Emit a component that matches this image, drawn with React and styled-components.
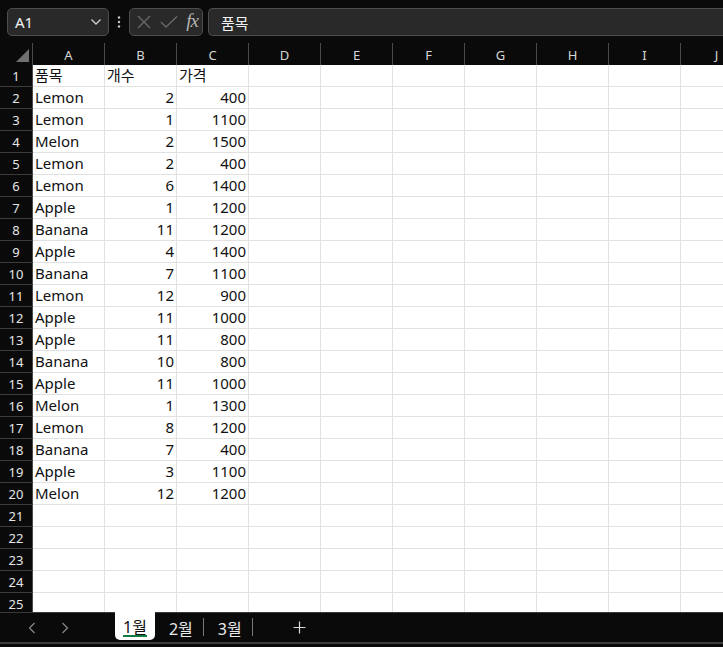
import React from 'react'
import styled, { createGlobalStyle } from 'styled-components'

const GlobalStyle = createGlobalStyle`
  html, body {
    margin: 0;
    padding: 0;
    background: #0a0a0a;
    overflow: hidden;
  }
  body {
    font-family: "Noto Sans", "Noto Sans CJK KR", sans-serif;
  }
`

const rows = [
  ['품목', '개수', '가격'],
  ['Lemon', 2, 400],
  ['Lemon', 1, 1100],
  ['Melon', 2, 1500],
  ['Lemon', 2, 400],
  ['Lemon', 6, 1400],
  ['Apple', 1, 1200],
  ['Banana', 11, 1200],
  ['Apple', 4, 1400],
  ['Banana', 7, 1100],
  ['Lemon', 12, 900],
  ['Apple', 11, 1000],
  ['Apple', 11, 800],
  ['Banana', 10, 800],
  ['Apple', 11, 1000],
  ['Melon', 1, 1300],
  ['Lemon', 8, 1200],
  ['Banana', 7, 400],
  ['Apple', 3, 1100],
  ['Melon', 12, 1200],
]
const columns = ['A', 'B', 'C', 'D', 'E', 'F', 'G', 'H', 'I', 'J']
const totalRows = 25

const Window = styled.div`
  width: 723px;
  height: 647px;
  background: #0a0a0a;
  display: flex;
  flex-direction: column;
  overflow: hidden;
`

const FormulaBar = styled.div`
  display: flex;
  align-items: center;
  height: 28px;
  padding: 8px 0 7px 7px;
`

const FieldBox = styled.div`
  box-sizing: border-box;
  height: 28px;
  background: #292929;
  border: 1px solid #4d4d4d;
  border-radius: 5px;
  display: flex;
  align-items: center;
`

const NameBox = styled(FieldBox)`
  width: 102px;
  padding: 0 6px 0 7px;
  justify-content: space-between;
  color: #f2f2f2;
  font-size: 15px;
`

const Dots = styled.div`
  width: 20px;
  display: flex;
  justify-content: center;
`

const ActionBox = styled(FieldBox)`
  width: 74px;
  padding: 0 4px 0 6px;
  justify-content: space-between;
`

const Fx = styled.span`
  font-family: "Liberation Serif", "DejaVu Serif", serif;
  font-style: italic;
  font-size: 19px;
  color: #b5b5b5;
  letter-spacing: -1px;
  margin-top: -3px;
`

const FormulaInput = styled(FieldBox)`
  flex: 1;
  margin-left: 5px;
  padding-left: 12px;
  border-right: none;
  border-radius: 5px 0 0 5px;
  color: #f2f2f2;
  font-size: 15px;
`

const Sheet = styled.div`
  flex: 1;
  display: grid;
  grid-template-columns: 33px repeat(10, 72px);
  grid-template-rows: 22px repeat(${totalRows}, 22px);
  background: #fff;
  overflow: hidden;
`

const Corner = styled.div`
  position: relative;
  background: #0a0a0a;
  box-sizing: border-box;
  border-right: 1px solid #4a4a4a;
  &::after {
    content: '';
    position: absolute;
    right: 3px;
    bottom: 3px;
    width: 0;
    height: 0;
    border-left: 13px solid transparent;
    border-bottom: 13px solid #707070;
  }
`

const ColHeader = styled.div`
  box-sizing: border-box;
  background: #0a0a0a;
  color: #d6d6d6;
  font-size: 13px;
  display: flex;
  align-items: center;
  justify-content: center;
  border-right: 1px solid #4a4a4a;
  padding-top: 1px;
`

const RowHeader = styled.div`
  box-sizing: border-box;
  background: #0a0a0a;
  color: #e6e6e6;
  font-size: 13px;
  display: flex;
  align-items: center;
  justify-content: center;
  border-right: 1px solid #4a4a4a;
  border-bottom: 1px solid #3c3c3c;
`

const Cell = styled.div`
  box-sizing: border-box;
  background: #fff;
  color: #111;
  font-size: 15px;
  line-height: 21px;
  padding: 0 2px;
  white-space: nowrap;
  text-align: ${(p) => (p.numeric ? 'right' : 'left')};
  border-right: 1px solid #e1e1e1;
  border-bottom: 1px solid #e1e1e1;
`

const TabBar = styled.div`
  height: 29px;
  flex-shrink: 0;
  display: flex;
  align-items: flex-start;
  background: #0a0a0a;
  border-top: 1px solid #3a3a3a;
  border-bottom: 2px solid #3d3d3d;
  margin-bottom: 3px;
`

const NavGroup = styled.div`
  display: flex;
  padding-left: 15px;
  width: 100px;
`

const NavButton = styled.div`
  width: 33px;
  height: 29px;
  display: flex;
  align-items: center;
  justify-content: center;
`

const Tab = styled.div`
  position: relative;
  box-sizing: border-box;
  height: ${(p) => (p.active ? '28px' : '29px')};
  padding: ${(p) => (p.active ? '0 8px' : '0 10px 0 14px')};
  display: flex;
  align-items: center;
  font-size: 16px;
  color: ${(p) => (p.active ? '#111' : '#eaeaea')};
  background: ${(p) => (p.active ? '#fff' : 'transparent')};
  border-radius: ${(p) => (p.active ? '0 0 5px 5px' : '0')};
  margin-top: ${(p) => (p.active ? '-1px' : '0')};
  &::after {
    content: '';
    display: ${(p) => (p.active ? 'block' : 'none')};
    position: absolute;
    left: 8px;
    right: 8px;
    bottom: 3px;
    height: 2px;
    background: #107c41;
  }
`

const TabDivider = styled.div`
  width: 1px;
  height: 18px;
  margin-top: 5px;
  background: #777;
`

const AddTab = styled.div`
  width: 94px;
  height: 29px;
  display: flex;
  align-items: center;
  justify-content: center;
`

const Chevron = () => (
  <svg width="12" height="8" viewBox="0 0 12 8">
    <path d="M1.5 1.5 L6 6 L10.5 1.5" fill="none" stroke="#d0d0d0" strokeWidth="1.3" />
  </svg>
)

const VDots = () => (
  <svg width="4" height="12" viewBox="0 0 4 12">
    <circle cx="2" cy="1.5" r="1.2" fill="#c8c8c8" />
    <circle cx="2" cy="6" r="1.2" fill="#c8c8c8" />
    <circle cx="2" cy="10.5" r="1.2" fill="#c8c8c8" />
  </svg>
)

const Cross = () => (
  <svg width="16" height="16" viewBox="0 0 16 16">
    <path d="M2 2 L14 14 M14 2 L2 14" stroke="#6a6a6a" strokeWidth="1.3" />
  </svg>
)

const Check = () => (
  <svg width="18" height="14" viewBox="0 0 18 14">
    <path d="M1 7 L6 12 L17 1.5" fill="none" stroke="#6a6a6a" strokeWidth="1.3" />
  </svg>
)

const Arrow = ({ dir }) => (
  <svg width="8" height="12" viewBox="0 0 8 12">
    <path
      d={dir === 'left' ? 'M6.5 1 L1.5 6 L6.5 11' : 'M1.5 1 L6.5 6 L1.5 11'}
      fill="none"
      stroke="#8a8a8a"
      strokeWidth="1.2"
    />
  </svg>
)

const Plus = () => (
  <svg width="13" height="13" viewBox="0 0 13 13">
    <path d="M6.5 0.5 V12.5 M0.5 6.5 H12.5" stroke="#d8d8d8" strokeWidth="1.2" />
  </svg>
)

export default function App() {
  const cells = []
  for (let r = 0; r < totalRows; r++) {
    cells.push(<RowHeader key={`h${r}`}>{r + 1}</RowHeader>)
    const data = rows[r] || []
    columns.forEach((c, i) => {
      const v = data[i]
      cells.push(
        <Cell key={`${c}${r}`} numeric={typeof v === 'number'}>
          {v}
        </Cell>
      )
    })
  }

  return (
    <Window>
      <GlobalStyle />
      <FormulaBar>
        <NameBox>
          A1
          <Chevron />
        </NameBox>
        <Dots>
          <VDots />
        </Dots>
        <ActionBox>
          <Cross />
          <Check />
          <Fx>fx</Fx>
        </ActionBox>
        <FormulaInput>품목</FormulaInput>
      </FormulaBar>
      <Sheet>
        <Corner />
        {columns.map((c) => (
          <ColHeader key={c}>{c}</ColHeader>
        ))}
        {cells}
      </Sheet>
      <TabBar>
        <NavGroup>
          <NavButton>
            <Arrow dir="left" />
          </NavButton>
          <NavButton>
            <Arrow dir="right" />
          </NavButton>
        </NavGroup>
        <Tab active>1월</Tab>
        <Tab>2월</Tab>
        <TabDivider />
        <Tab>3월</Tab>
        <TabDivider />
        <AddTab>
          <Plus />
        </AddTab>
      </TabBar>
    </Window>
  )
}
